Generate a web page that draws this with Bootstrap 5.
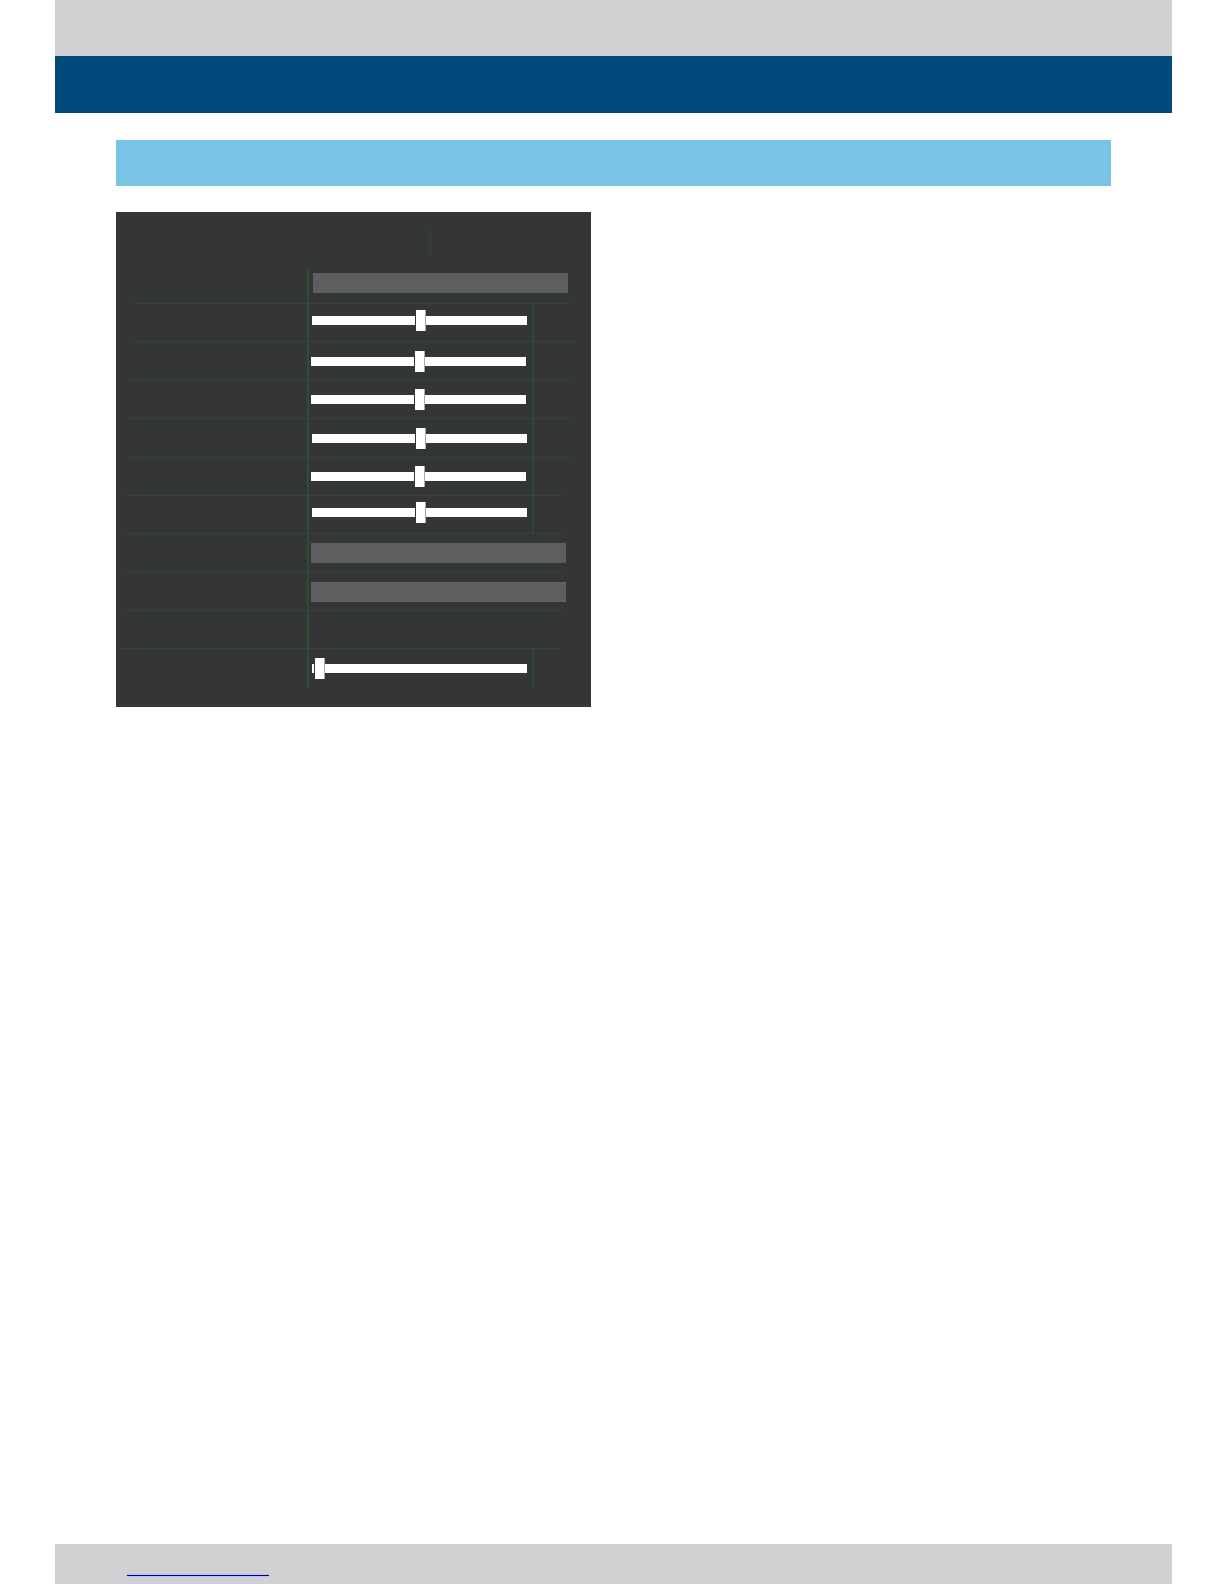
<!DOCTYPE html>
<html lang="en">
<head>
<meta charset="utf-8">
<meta name="viewport" content="width=device-width, initial-scale=1">
<title>Settings</title>
<link href="https://cdn.jsdelivr.net/npm/bootstrap@5.3.0/dist/css/bootstrap.min.css" rel="stylesheet">
<style>
  body { font-family: "Liberation Sans", Arial, sans-serif; background: #fff; }
  .sheet { padding-left: 55px; padding-right: 52px; }
  .strip-top { height: 56px; background: #d0d1d3; }
  .strip-title { height: 57px; background: #00497a; }
  .content { padding: 27px 61px; gap: 26px; }
  .section-bar { height: 46px; background: #79c3e5; }
  .panel { width: 475px; max-width: 100%; background: #343536; padding: 16px 0 19px; }
  .tabs-row { height: 25px; margin-bottom: 16px; }
  .tab-first { flex: 0 0 315px; border-right: 1px solid #264f2a; }

  /* one setting: label, control, value */
  .setting { --in: 12px; --out: 27px; height: 38px; border-top: 1px solid #34482f;
    margin: 0 var(--out) 0 var(--in); }
  .setting.tall { height: 39px; }
  .setting.first { height: 34px; border-top: 0; }
  .setting.last { height: 40px; }
  .level-a { --in: 16px; --out: 19px; }
  .level-b { --in: 16px; --out: 14px; }
  .level-c { --in: 12px; --out: 19px; }
  .level-d { --in: 8px; --out: 27px; }
  .level-e { --in: 5px; --out: 31px; }
  .setting-label { flex: 0 0 calc(191px - var(--in)); }
  .setting-control { flex: 0 0 225px; border-left: 2px solid #2f4e30; padding-left: 2px; }
  .setting-control.inset { padding-left: 3px; }
  .setting-control.wide { padding-left: 4px; }
  .raised { padding-bottom: 4px; }
  .first .raised { padding-bottom: 6px; }
  .lowered { padding-top: 2px; }
  .setting-value { flex: 1 1 0; border-left: 2px solid #274d28; }

  .choice { appearance: none; flex: 0 0 255px; height: 20px; border: 0; border-radius: 0;
    background: #5d5e60; color: #fff; padding: 0; }
  .level { appearance: none; flex: 0 0 215px; width: 215px; height: 21px; margin: 0; padding: 0; background: none; }
  .level::-webkit-slider-runnable-track { height: 9px; background: #fff; border-radius: 0; }
  .level::-webkit-slider-thumb { -webkit-appearance: none; width: 11px; height: 21px; margin-top: -6px;
    background: #fff; border: 0 solid; border-width: 0 1px; border-color: #343536 #aaabac #343536 #343536; border-radius: 0; box-shadow: none; }
  .level::-moz-range-track { height: 9px; background: #fff; }
  .level::-moz-range-thumb { width: 9px; height: 21px; background: #fff; border-radius: 0; }

  .strip-bottom { height: 40px; background: #d0d1d3; padding: 0 72px; }
  .site-link { width: 142px; height: 32px; border-bottom: 1px solid #000096;
    box-shadow: 0 1px #b9bff2, inset 0 -1px #b9bff2; }
</style>
<script src="https://cdn.jsdelivr.net/npm/bootstrap@5.3.0/dist/js/bootstrap.bundle.min.js"></script>
</head>
<body>
<div class="sheet min-vh-100 d-flex flex-column">
  <header>
    <div class="strip-top"></div>
    <div class="strip-title"></div>
  </header>

  <main class="content flex-grow-1 d-flex flex-column">
    <div class="section-bar"></div>

    <form class="panel">
      <div class="tabs-row d-flex"><div class="tab-first"></div></div>

      <div class="setting first level-a d-flex">
        <div class="setting-label"></div>
        <div class="setting-control wide raised d-flex align-items-center"><select class="choice" aria-label="Mode"><option></option></select></div>
      </div>
      <div class="setting level-a d-flex">
        <div class="setting-label"></div>
        <div class="setting-control inset raised d-flex align-items-center"><input type="range" class="form-range level" min="0" max="204" value="103" aria-label="Level 1"></div>
        <div class="setting-value"></div>
      </div>
      <div class="setting level-b d-flex">
        <div class="setting-label"></div>
        <div class="setting-control lowered d-flex align-items-center"><input type="range" class="form-range level" min="0" max="204" value="103" aria-label="Level 2"></div>
        <div class="setting-value"></div>
      </div>
      <div class="setting tall level-c d-flex">
        <div class="setting-label"></div>
        <div class="setting-control d-flex align-items-center"><input type="range" class="form-range level" min="0" max="204" value="103" aria-label="Level 3"></div>
        <div class="setting-value"></div>
      </div>
      <div class="setting tall level-c d-flex">
        <div class="setting-label"></div>
        <div class="setting-control inset d-flex align-items-center"><input type="range" class="form-range level" min="0" max="204" value="103" aria-label="Level 4"></div>
        <div class="setting-value"></div>
      </div>
      <div class="setting level-c d-flex">
        <div class="setting-label"></div>
        <div class="setting-control d-flex align-items-center"><input type="range" class="form-range level" min="0" max="204" value="103" aria-label="Level 5"></div>
        <div class="setting-value"></div>
      </div>
      <div class="setting level-d d-flex">
        <div class="setting-label"></div>
        <div class="setting-control inset raised d-flex align-items-center"><input type="range" class="form-range level" min="0" max="204" value="103" aria-label="Level 6"></div>
        <div class="setting-value"></div>
      </div>
      <div class="setting tall level-d d-flex">
        <div class="setting-label"></div>
        <div class="setting-control d-flex align-items-center"><select class="choice" aria-label="Option 1"><option></option></select></div>
      </div>
      <div class="setting level-d d-flex">
        <div class="setting-label"></div>
        <div class="setting-control d-flex align-items-center"><select class="choice" aria-label="Option 2"><option></option></select></div>
      </div>
      <div class="setting level-d d-flex">
        <div class="setting-label"></div>
        <div class="setting-control"></div>
      </div>
      <div class="setting last level-e d-flex">
        <div class="setting-label"></div>
        <div class="setting-control inset d-flex align-items-center"><input type="range" class="form-range level" min="0" max="204" value="2" aria-label="Level 7"></div>
        <div class="setting-value"></div>
      </div>
    </form>
  </main>

  <footer class="strip-bottom">
    <a class="site-link d-block" href="#" aria-label="Website"></a>
  </footer>
</div>
</body>
</html>
